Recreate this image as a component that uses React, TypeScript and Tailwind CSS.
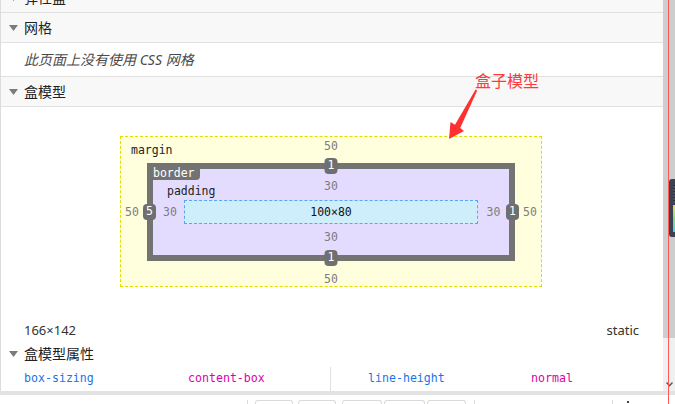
import React from 'react';

const mono = "font-['DejaVu_Sans_Mono','Liberation_Mono',monospace]";

const Caret = () => (
  <svg width="9" height="6" viewBox="0 0 9 6" className="ml-[8px] mr-[6px] shrink-0">
    <path d="M0 0H9L4.5 6Z" fill="#7b7b7b" />
  </svg>
);

const SectionHeader = ({ title }: { title: string }) => (
  <div className="h-[30px] shrink-0 flex items-center bg-[#f8f8f8] border-b border-[#e0e0e0]">
    <Caret />
    <span className="text-[14px] leading-none text-[#222]">{title}</span>
  </div>
);

const Badge = ({ value, className }: { value: string; className: string }) => (
  <div
    className={`absolute w-[13px] h-[16px] rounded-[4px] bg-[#6f6f6f] text-white flex items-center justify-center text-[11.5px] leading-none ${className}`}
  >
    {value}
  </div>
);

const BoxModel = () => (
  <div className={`pt-[29px] pl-[119px] ${mono} text-[11.5px] leading-[14px]`}>
    {/* margin */}
    <div className="relative w-[422px] h-[151px] border border-dashed border-[#dede00] bg-[#ffffde] grid grid-cols-[26px_368px_26px] grid-rows-[26px_98px_25px]">
      <span className="absolute left-[10px] top-[6px] text-[#222]">margin</span>
      <div />
      <div className="flex justify-center pt-[2px] text-[#7d7d7d]">50</div>
      <div />
      <div className="flex items-center justify-center pr-[4px] text-[#7d7d7d]">50</div>

      {/* border */}
      <div className="relative border-[6px] border-[#737373] bg-[#e3dcff] grid grid-cols-[31px_294px_31px] grid-rows-[31px_24px_31px]">
        <span className="absolute left-0 top-[-3px] h-[14px] pr-[5px] bg-[#737373] text-white rounded-br-[4px]">
          border
        </span>
        <span className="absolute left-[14px] top-[15px] text-[#222]">padding</span>
        <Badge value="1" className="left-1/2 -translate-x-1/2 top-[-11px]" />
        <Badge value="1" className="left-1/2 -translate-x-1/2 bottom-[-11px]" />
        <Badge value="5" className="left-[-10px] top-1/2 -translate-y-1/2" />
        <Badge value="1" className="right-[-10px] top-1/2 -translate-y-1/2" />

        <div />
        <div className="flex justify-center pt-[10px] text-[#7d7d7d]">30</div>
        <div />
        <div className="flex items-center justify-center pl-[3px] text-[#7d7d7d]">30</div>
        {/* content */}
        <div className="border border-dashed border-[#5ba4f0] bg-[#cdeefa] flex items-center justify-center text-[#111]">
          100×80
        </div>
        <div className="flex items-center justify-center text-[#7d7d7d]">30</div>
        <div />
        <div className="flex justify-center pt-[6px] text-[#7d7d7d]">30</div>
        <div />
      </div>

      <div className="flex items-center justify-center pl-[4px] text-[#7d7d7d]">50</div>
      <div />
      <div className="flex justify-center items-end text-[#7d7d7d]">50</div>
      <div />
    </div>
  </div>
);

export default function App() {
  return (
    <div className="relative w-[675px] h-[404px] overflow-hidden bg-white font-['Noto_Sans','Noto_Sans_CJK_SC',sans-serif]">
      <div className="flex h-[391px]">
        <main className="w-[663px] shrink-0 border-l border-[#dcdcdc] overflow-hidden">
          <div className="-mt-[17px] flex flex-col">
            <SectionHeader title="弹性盒" />
            <SectionHeader title="网格" />
            <div className="h-[34px] shrink-0 flex items-center pl-[23px] border-b border-[#e0e0e0]">
              <span className="italic text-[14px] leading-none text-[#4a4a4a]">此页面上没有使用 CSS 网格</span>
            </div>
            <SectionHeader title="盒模型" />

            <BoxModel />

            <div className="mt-[34px] h-[20px] flex items-center justify-between pl-[23px] pr-[24px] text-[13px] text-[#333]">
              <span>166×142</span>
              <span>static</span>
            </div>

            <div className="h-[26px] flex items-center">
              <Caret />
              <span className="text-[14px] leading-none text-[#222]">盒模型属性</span>
            </div>

            <div className={`h-[24px] flex ${mono} text-[11.6px]`}>
              <div className="w-[329px] grid grid-cols-[164px_1fr] items-center pl-[23px]">
                <span className="text-[#1a73e8]">box-sizing</span>
                <span className="text-[#dd00a9]">content-box</span>
              </div>
              <div className="w-px bg-[#e0e0e0]" />
              <div className="flex-1 grid grid-cols-[163px_1fr] items-center pl-[37px]">
                <span className="text-[#1a73e8]">line-height</span>
                <span className="text-[#dd00a9]">normal</span>
              </div>
            </div>
          </div>
        </main>

        {/* scrollbar */}
        <div className="w-[12px] flex flex-col">
          <div className="h-[338px] bg-[#cdcdcd]" />
          <div className="flex-1 bg-[#f0f0f0] flex items-end justify-center pb-[4px]">
            <svg width="7" height="5" viewBox="0 0 7 5">
              <path d="M0.5 0.5L3.5 3.8L6.5 0.5" stroke="#555" strokeWidth="1.4" fill="none" />
            </svg>
          </div>
        </div>
      </div>

      <div className="h-[4px] bg-[#e3e3e3]" />

      {/* partially visible toolbar below */}
      <div className="h-[9px] flex items-end pl-[247px]">
        <div className="w-px h-[4px] bg-[#dadada] mr-[7px]" />
        <div className="w-[38px] h-[4px] border-t border-x border-[#dadada] rounded-t-[3px] mr-[5px]" />
        <div className="w-[38px] h-[4px] border-t border-x border-[#dadada] rounded-t-[3px] mr-[6px]" />
        <div className="w-[40px] h-[4px] border-t border-x border-[#dadada] rounded-t-[3px] mr-[2px]" />
        <div className="w-[41px] h-[4px] border-t border-x border-[#dadada] rounded-t-[3px] mr-[2px]" />
        <div className="w-[39px] h-[4px] border-t border-x border-[#dadada] rounded-t-[3px] mr-[8px]" />
        <div className="w-px h-[4px] bg-[#dadada] mr-[137px]" />
        <div className="w-px h-[4px] bg-[#dadada] mr-[14px]" />
        <div className="w-[2px] h-[2px] mb-[1px] bg-[#444]" />
      </div>

      {/* screen widget at the right edge */}
      <div className="absolute left-[669px] top-[179px] w-[7px] h-[58px] bg-[#3c4252] rounded-l-[3px] flex flex-col items-end pt-[6px] gap-[2px]">
        <div className="w-[3px] h-[18px] bg-[repeating-linear-gradient(#2a2e38_0_1px,#4a5060_1px_3px)]" />
        <div className="w-[3px] h-[27px] bg-linear-to-b from-[#e6e04a] via-[#7ee07a] to-[#3fd6e6]" />
      </div>

      {/* red guide line */}
      <div className="absolute left-[668px] top-0 w-px h-[404px] bg-[#ff5a5a]" />

      {/* annotation */}
      <span className="absolute left-[475px] top-[71px] text-[16px] leading-[20px] text-[#ff3a3a]">盒子模型</span>
      <svg className="absolute left-0 top-0 pointer-events-none" width="675" height="404">
        <path
          d="M449 139L450.5 122L455 124.8L475.6 89.4L477.2 90.4L460.2 128L464 131Z"
          fill="#ff3030"
        />
      </svg>
    </div>
  );
}
